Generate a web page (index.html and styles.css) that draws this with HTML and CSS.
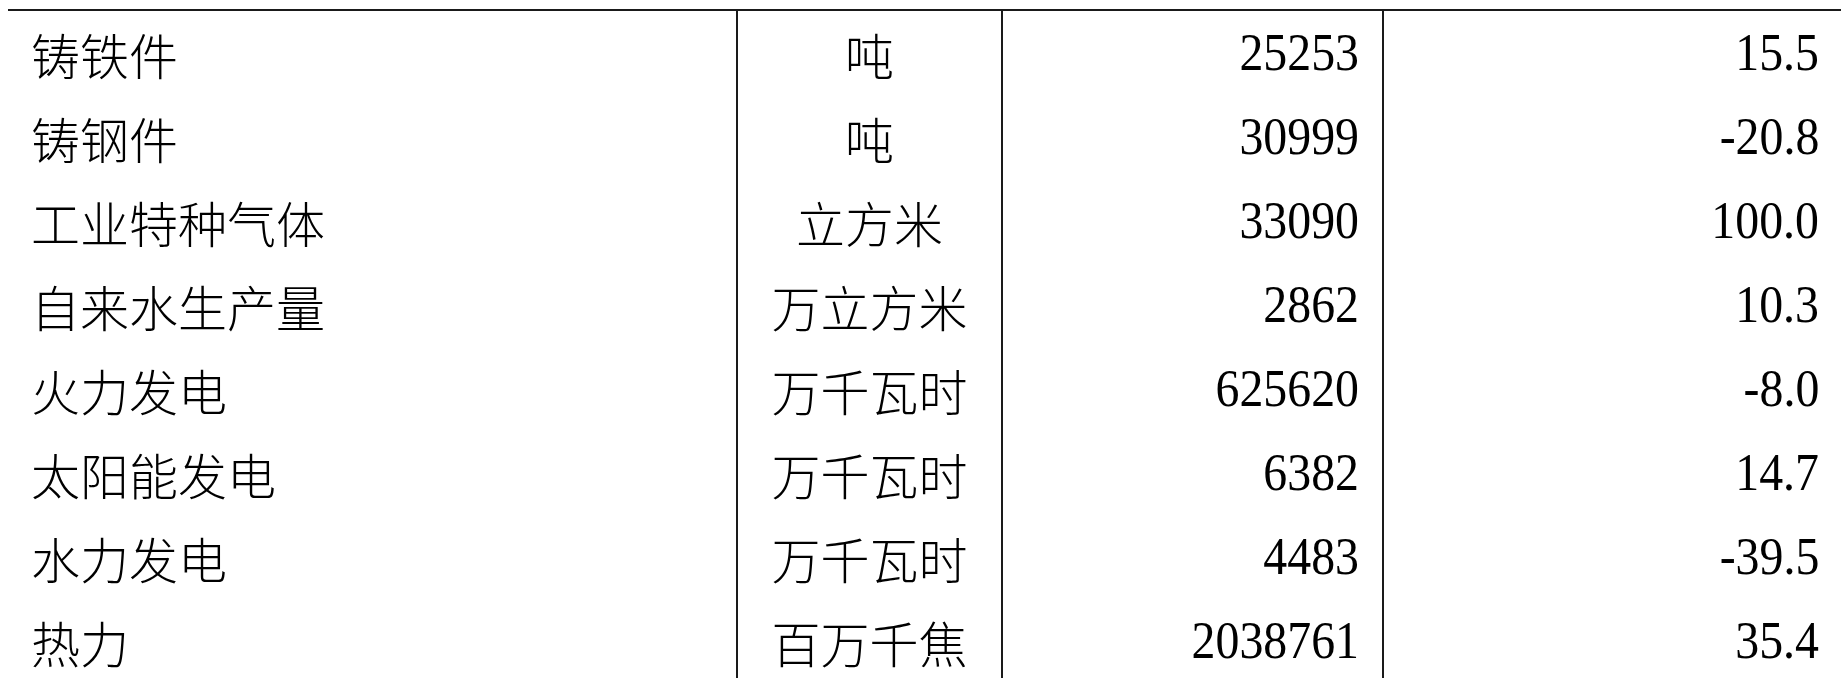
FILE: index.html
```html
<!DOCTYPE html>
<html lang="zh-CN">
<head>
<meta charset="utf-8">
<title>工业产品产量</title>
<link rel="stylesheet" href="styles.css">
</head>
<body>
<div class="table">
  <div class="row"><div class="cell name">铸铁件</div><div class="cell unit">吨</div><div class="cell num"><span class="v">25253</span></div><div class="cell pct"><span class="v">15.5</span></div></div>
  <div class="row"><div class="cell name">铸钢件</div><div class="cell unit">吨</div><div class="cell num"><span class="v">30999</span></div><div class="cell pct"><span class="v">-20.8</span></div></div>
  <div class="row"><div class="cell name">工业特种气体</div><div class="cell unit">立方米</div><div class="cell num"><span class="v">33090</span></div><div class="cell pct"><span class="v">100.0</span></div></div>
  <div class="row"><div class="cell name">自来水生产量</div><div class="cell unit">万立方米</div><div class="cell num"><span class="v">2862</span></div><div class="cell pct"><span class="v">10.3</span></div></div>
  <div class="row"><div class="cell name">火力发电</div><div class="cell unit">万千瓦时</div><div class="cell num"><span class="v">625620</span></div><div class="cell pct"><span class="v">-8.0</span></div></div>
  <div class="row"><div class="cell name">太阳能发电</div><div class="cell unit">万千瓦时</div><div class="cell num"><span class="v">6382</span></div><div class="cell pct"><span class="v">14.7</span></div></div>
  <div class="row"><div class="cell name">水力发电</div><div class="cell unit">万千瓦时</div><div class="cell num"><span class="v">4483</span></div><div class="cell pct"><span class="v">-39.5</span></div></div>
  <div class="row"><div class="cell name">热力</div><div class="cell unit">百万千焦</div><div class="cell num"><span class="v">2038761</span></div><div class="cell pct"><span class="v">35.4</span></div></div>
</div>
</body>
</html>
```

FILE: styles.css
```css
html, body {
  background: #fff;
}
body {
  margin: 9px 0 0 8px;
  color: #000;
  font-family: "Liberation Serif", "Noto Sans CJK SC", serif;
}
.table {
  width: 1833px;
  border-top: 2px solid #1a1a1a;
}
.row {
  display: grid;
  grid-template-columns: 728px 265px 381px 459px;
  height: 84px;
}
.cell {
  display: flex;
  align-items: center;
  line-height: 1;
  white-space: nowrap;
  box-sizing: border-box;
}
.cell + .cell {
  border-left: 2px solid #1a1a1a;
}
.name, .unit {
  font-family: "Noto Sans CJK SC", sans-serif;
  font-size: 49px;
  font-weight: 300;
}
.name {
  padding-left: 23px;
}
.unit {
  justify-content: center;
}
.num, .pct {
  font-size: 52px;
  justify-content: flex-end;
}
.num {
  padding-right: 23px;
}
.pct {
  padding-right: 22px;
}
.v {
  display: inline-block;
  transform: scaleX(0.92);
  transform-origin: right center;
}
```
